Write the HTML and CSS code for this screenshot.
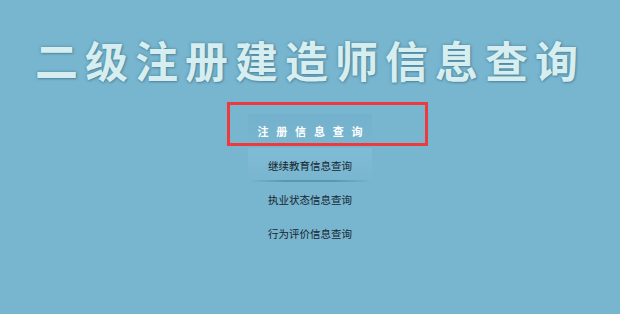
FILE: index.html
```html
<!DOCTYPE html>
<html lang="zh-CN">
<head>
<meta charset="utf-8">
<title>二级注册建造师信息查询</title>
<link rel="stylesheet" href="styles.css">
</head>
<body>
<div class="page">
  <h1 class="title">二级注册建造师信息查询</h1>
  <ul class="menu">
    <li class="menu-item menu-item--active"><span class="tab-label">注册信息查询</span></li>
    <li class="menu-item menu-item--panel">继续教育信息查询</li>
    <li class="menu-item">执业状态信息查询</li>
    <li class="menu-item">行为评价信息查询</li>
  </ul>
</div>
</body>
</html>
```

FILE: styles.css
```css
html, body {
  margin: 0;
  padding: 0;
}
body {
  width: 620px;
  height: 314px;
  overflow: hidden;
  background: #78b5cf;
  font-family: "Noto Sans CJK SC", "Noto Sans", sans-serif;
}
.page {
  display: flex;
  flex-direction: column;
  align-items: center;
  padding-top: 37px;
}
.title {
  margin: 0;
  font-size: 43px;
  line-height: 44px;
  font-weight: 700;
  letter-spacing: 7px;
  color: #d6eeef;
  text-shadow: 0 0 3px rgba(40, 90, 110, 0.5), 1px 1px 2px rgba(40, 90, 110, 0.35);
  white-space: nowrap;
}
.menu {
  list-style: none;
  margin: 33px 0 0;
  padding: 0;
  width: 124px;
  display: flex;
  flex-direction: column;
}
.menu-item {
  height: 34px;
  display: flex;
  align-items: center;
  justify-content: center;
  font-size: 10.5px;
  color: #17252f;
  white-space: nowrap;
  position: relative;
}
.menu-item--active {
  background: linear-gradient(to bottom, rgba(100, 165, 195, 0.25), rgba(130, 190, 215, 0.1));
}
.tab-label {
  font-size: 11px;
  font-weight: 700;
  color: #ffffff;
  letter-spacing: 7.8px;
  padding-left: 7.8px;
}
.menu-item--active::after {
  content: "";
  position: absolute;
  left: -21px;
  top: -12px;
  width: 201px;
  height: 44px;
  box-sizing: border-box;
  border: 3px solid #ec3a3f;
}
.menu-item--panel {
  background: linear-gradient(to bottom, rgba(140, 196, 220, 0.45), rgba(120, 181, 207, 0.15));
}
.menu-item--panel::after {
  content: "";
  position: absolute;
  left: 0;
  right: 0;
  bottom: 0;
  height: 2px;
  background: linear-gradient(to right, rgba(70, 130, 160, 0), rgba(70, 130, 160, 0.6) 30%, rgba(70, 130, 160, 0.6) 70%, rgba(70, 130, 160, 0));
}
```
